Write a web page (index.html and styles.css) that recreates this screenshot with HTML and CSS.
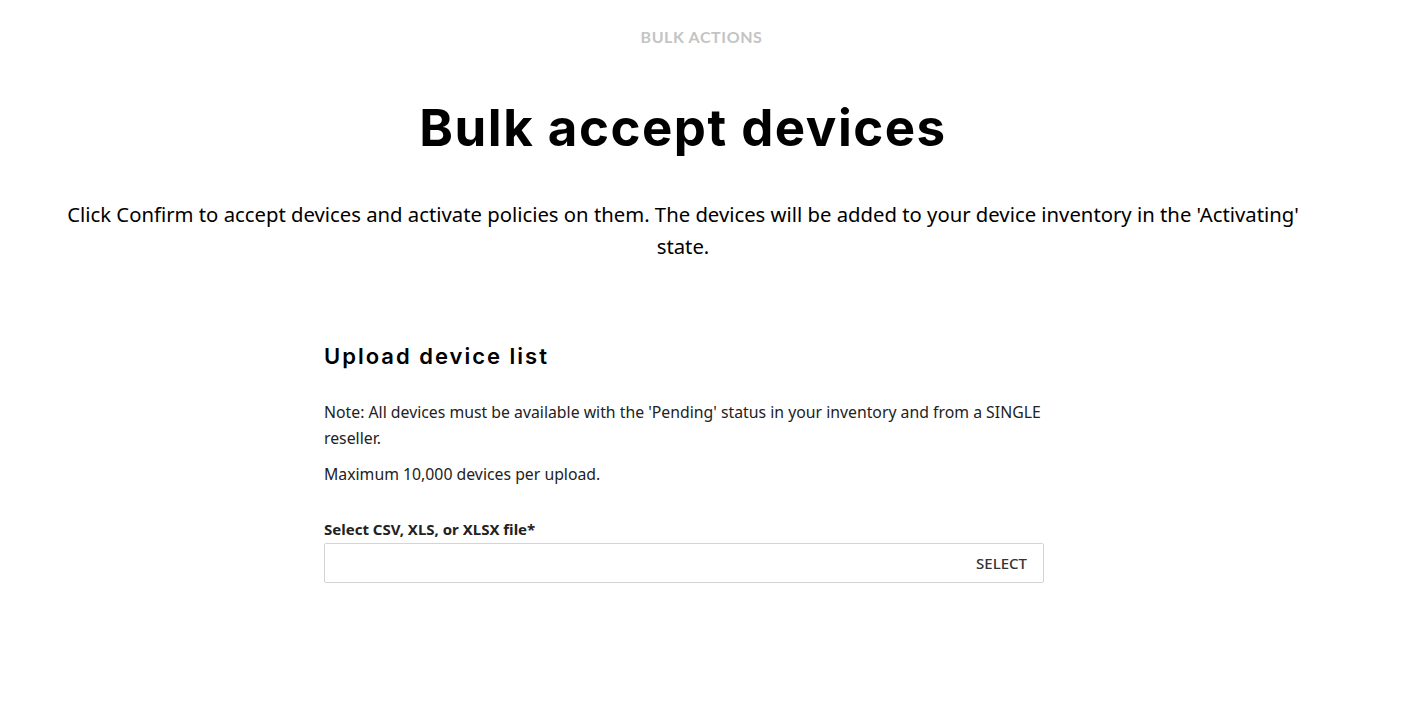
FILE: index.html
```html
<!DOCTYPE html>
<html lang="en">
<head>
<meta charset="utf-8">
<title>Bulk accept devices</title>
<link rel="stylesheet" href="styles.css">
</head>
<body>
<main class="page">
  <div class="eyebrow">BULK ACTIONS</div>
  <header class="intro">
    <h1 class="title">Bulk accept devices</h1>
    <p class="lead">Click Confirm to accept devices and activate policies on them. The devices will be added to your device inventory in the 'Activating' state.</p>
  </header>
  <section class="upload">
    <h2 class="upload-title">Upload device list</h2>
    <p class="note">Note: All devices must be available with the 'Pending' status in your inventory and from a SINGLE reseller.</p>
    <p class="note note-max">Maximum 10,000 devices per upload.</p>
    <label class="field-label">Select CSV, XLS, or XLSX file*</label>
    <div class="file-field">
      <span class="file-name"></span>
      <button class="select-btn" type="button">SELECT</button>
    </div>
  </section>
</main>
</body>
</html>
```

FILE: styles.css
```css
* { box-sizing: border-box; }
html, body { margin: 0; padding: 0; background: #fff; }
body {
  font-family: "Noto Sans", "Open Sans", sans-serif;
  color: #000;
}
.page {
  display: flex;
  flex-direction: column;
  align-items: center;
  padding: 27px 47px 0 0;
}
.eyebrow {
  margin-left: 37px;
  font-family: "Lato", "Inter", sans-serif;
  font-weight: 700;
  font-size: 16px;
  line-height: 20px;
  letter-spacing: 0.6px;
  color: #c4c4c4;
}
.intro {
  display: flex;
  flex-direction: column;
  align-items: center;
  text-align: center;
  width: 1250px;
}
.title {
  margin: 46px 0 0;
  font-family: "Inter", "Lato", sans-serif;
  font-weight: 700;
  font-size: 51px;
  line-height: 70px;
  letter-spacing: 1.5px;
  color: #000;
}
.lead {
  margin: 35px 0 0;
  font-size: 20.3px;
  line-height: 32px;
  color: #000;
}
.upload {
  width: 720px;
  margin-left: 2px;
  margin-top: 78px;
  display: flex;
  flex-direction: column;
}
.upload-title {
  margin: 0;
  font-family: "Inter", "Lato", sans-serif;
  font-weight: 600;
  font-size: 22px;
  line-height: 32px;
  letter-spacing: 2px;
  color: #000;
}
.note {
  margin: 27px 0 0;
  font-size: 15.8px;
  line-height: 26px;
  color: #222;
}
.note-max { margin-top: 10px; }
.field-label {
  margin-top: 32px;
  font-size: 15px;
  line-height: 20px;
  font-weight: 700;
  color: #222;
}
.file-field {
  margin-top: 4px;
  height: 40px;
  border: 1px solid #d4d4d4;
  border-radius: 2px;
  display: flex;
  align-items: center;
  justify-content: space-between;
}
.select-btn {
  border: 0;
  background: transparent;
  font-family: "Noto Sans", "Open Sans", sans-serif;
  font-size: 15px;
  font-weight: 500;
  color: #333;
  padding: 0 16px;
  height: 100%;
  cursor: pointer;
}
```
